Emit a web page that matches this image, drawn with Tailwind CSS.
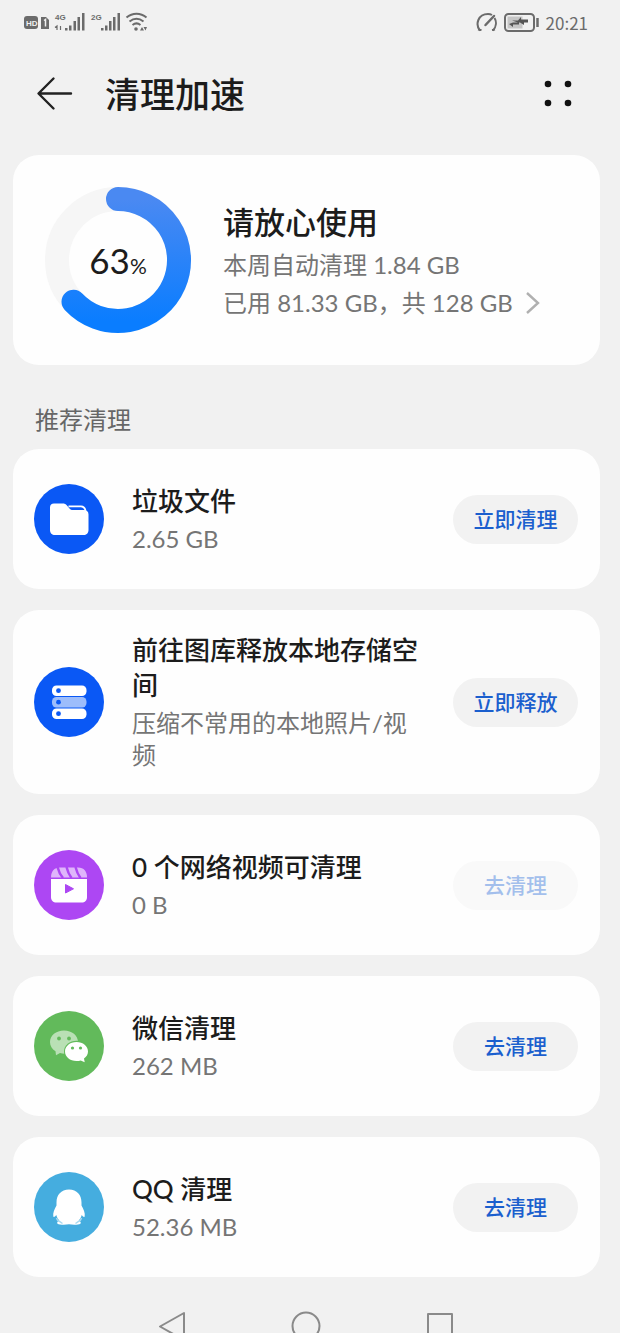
<!DOCTYPE html>
<html lang="zh-CN">
<head>
<meta charset="utf-8">
<meta name="viewport" content="width=device-width, initial-scale=1">
<title>清理加速</title>
<script src="https://cdn.jsdelivr.net/npm/@tailwindcss/browser@4"></script>
</head>
<body class="bg-[#f1f1f1] font-['Lato','Noto_Sans_CJK_SC',sans-serif] text-[#1c1c1c]">
<div class="flex min-h-screen flex-col">

  <!-- Status bar -->
  <div class="flex h-[46px] items-center justify-between pr-8 pl-6 text-[#6b6b6b]">
    <svg class="h-6 w-32" viewBox="0 0 128 24" fill="currentColor" role="img" aria-label="HD 4G 2G Wi-Fi">
      <rect x="0" y="5" width="14" height="13" rx="3"/>
      <text x="2" y="15" font-size="8" font-weight="700" fill="#f1f1f1" font-family="Liberation Sans">HD</text>
      <path d="M17 6h5l3 3v9h-8z"/>
      <path d="M20 9.500l1.500-1v7" fill="none" stroke="#f1f1f1" stroke-width="1.500"/>
      <text x="31" y="9" font-size="8" font-weight="700" font-family="Liberation Sans">4G</text>
      <path d="M33 19v-4l-2 1.500M36.500 15v4" fill="none" stroke="currentColor" stroke-width="1.200"/>
      <path d="M41 17h2.500v2.500H41zM45 14.500h2.500v5H45zM49.500 10h2.500v9.500h-2.500zM53.500 6h2.500v13.500h-2.500zM58 2h2.500v17.500H58z"/>
      <text x="67" y="9" font-size="8" font-weight="700" font-family="Liberation Sans">2G</text>
      <path d="M77 17h2.500v2.500H77zM81 14.500h2.500v5H81zM85 10h2.500v9.500H85zM89 6h2.500v13.500H89zM93.500 2H96v17.500h-2.500z"/>
      <g fill="none" stroke="currentColor" stroke-width="2"><path d="M102.500 6.500c6-5 14-5 20 0M105.500 10.500c4.500-3.500 9.500-3.500 14 0M108.500 14c2.500-2 5.500-2 8 0"/></g>
      <circle cx="112" cy="18" r="1.800"/><path d="M116 19.500l2-3.500 2 3.500zM119.500 16h3.500l-1.500 3.500z"/>
    </svg>
    <div class="flex items-center">
      <svg class="h-6 w-[70px]" viewBox="0 0 70 24" fill="none" stroke="currentColor" role="img" aria-label="电量">
        <path d="M4 19.500C-1 13.500 2 3 12 3c1.500 0 3 .4 4 1M18.500 7c2.500 4 1.500 9-1.500 12.500M2 18.500l3.500.5M19 18.500l-3 .5" stroke-width="2"/>
        <path d="M9.500 14L18 5" stroke-width="2.500" stroke-linecap="round"/>
        <rect x="29" y="3" width="29" height="17" rx="3.500" stroke-width="2"/>
        <path d="M31.500 5.500h15v12h-15z" fill="#c6c6c6" stroke="none"/>
        <path d="M36 9.500h6l3-3.500v2.500h7v3h-4v2.500l-4-2.500h-1v2h-6v2.500l-4-3 4-1.500h5z" fill="#555" stroke="none"/>
        <path d="M61.500 7v9" stroke-width="2.500"/>
      </svg>
      <time class="font-['Noto_Sans_CJK_SC',sans-serif] text-[17px] leading-6">20:21</time>
    </div>
  </div>

  <!-- Title bar -->
  <header class="flex h-[95px] items-center pr-12 pl-9">
    <button type="button" aria-label="返回" class="flex">
      <svg class="h-9 w-[37px]" viewBox="0 0 37 36" fill="none" stroke="#222" stroke-width="2.400" stroke-linecap="round" stroke-linejoin="round"><path d="M17.500 2.500L2.500 17.500l15 15M3 17.500h32"/></svg>
    </button>
    <h1 class="ml-8 flex-1 text-[35px] leading-[48px] font-medium">清理加速</h1>
    <button type="button" aria-label="更多" class="flex">
      <svg class="h-8 w-8" viewBox="0 0 32 32" fill="#111"><circle cx="8" cy="6" r="3.300"/><circle cx="28" cy="6" r="3.300"/><circle cx="8" cy="25" r="3.300"/><circle cx="28" cy="25" r="3.300"/></svg>
    </button>
  </header>

  <main class="mt-3.5 pr-5 pl-[13px]">
    <!-- Storage summary -->
    <section class="flex min-h-[210px] items-center rounded-[26px] bg-[#fefefe] pl-[31px]">
      <div class="relative h-[148px] w-[148px] shrink-0">
        <svg class="h-full w-full" viewBox="0 0 148 148" fill="none" stroke-width="24">
          <defs><linearGradient id="ring" x1="0" y1="0" x2="0" y2="1"><stop offset="0" stop-color="#4a89f2"/><stop offset="1" stop-color="#0a7dff"/></linearGradient></defs>
          <circle cx="74" cy="74" r="61" stroke="#f6f6f6"/>
          <path d="M74 13A61 61 0 1 1 29.500 115.700" stroke="url(#ring)" stroke-linecap="round"/>
        </svg>
        <p class="absolute inset-0 flex items-baseline justify-center pt-[46px] text-[35px] leading-[56px]">63<span class="text-[21px]">%</span></p>
      </div>
      <div class="ml-[31px]">
        <h2 class="text-[31px] leading-[48px] font-medium">请放心使用</h2>
        <p class="text-2xl leading-[38px] text-[#757575]">本周自动清理 1.84 GB</p>
        <a href="#storage" class="flex items-center text-2xl leading-[38px] text-[#757575]">已用 81.33 GB，共 128 GB
          <svg class="ml-3 h-6 w-4" viewBox="0 0 16 24" fill="none" stroke="#b0b0b0" stroke-width="2.400"><path d="M2 2l11 10L2 22"/></svg>
        </a>
      </div>
    </section>

    <h2 class="mt-[39px] mb-[13px] pl-[22px] text-2xl leading-8 text-[#666]">推荐清理</h2>

    <ul class="flex flex-col gap-[21px]">
      <li class="flex min-h-[140px] items-center rounded-[26px] bg-[#fefefe] py-[23px] pr-[22px] pl-[21px]">
        <svg class="h-[70px] w-[70px] shrink-0" viewBox="0 0 70 70" aria-hidden="true">
          <circle cx="35" cy="35" r="35" fill="#0a58f5"/>
          <path d="M20 19.500h9c1.500 0 2.500.5 3.500 1.500l3 3.500c1 1 2 1.500 3.500 1.500h11c2.800 0 4.500 1.700 4.500 4.500V46c0 3-2 5-5 5H21c-3 0-5-2-5-5V23.500c0-2.500 1.500-4 4-4z" fill="#fff"/>
          <path d="M34.500 22.300H47c2.500 0 4 1.500 4.500 4.500" fill="none" stroke="#fff" stroke-width="1.800"/>
        </svg>
        <div class="mx-7 flex-1">
          <h3 class="text-[26px] leading-[35px] font-medium">垃圾文件</h3>
          <p class="mt-1 text-2xl leading-8 text-[#757575]">2.65 GB</p>
        </div>
        <button type="button" class="h-[49px] w-[125px] shrink-0 rounded-full bg-[#f2f2f2] text-[21px] font-medium text-[#1b5fce]">立即清理</button>
      </li>

      <li class="flex min-h-[140px] items-center rounded-[26px] bg-[#fefefe] py-[23px] pr-[22px] pl-[21px]">
        <svg class="h-[70px] w-[70px] shrink-0" viewBox="0 0 70 70" aria-hidden="true">
          <circle cx="35" cy="35" r="35" fill="#0a58f5"/>
          <rect x="18" y="18.500" width="34.500" height="10.500" rx="4.500" fill="#fff"/>
          <rect x="18" y="30" width="34.500" height="10.500" rx="4.500" fill="#9dbdfb"/>
          <rect x="18" y="41.500" width="34.500" height="10.500" rx="4.500" fill="#fff"/>
          <g fill="#0a58f5"><circle cx="24.500" cy="23.700" r="2.400"/><circle cx="24.500" cy="35.200" r="2.400"/><circle cx="24.500" cy="46.700" r="2.400"/></g>
        </svg>
        <div class="mx-7 flex-1">
          <h3 class="text-[26px] leading-[35px] font-medium">前往图库释放本地存储空间</h3>
          <p class="mt-1 text-2xl leading-8 text-[#757575]">压缩不常用的本地照片/视频</p>
        </div>
        <button type="button" class="h-[49px] w-[125px] shrink-0 rounded-full bg-[#f2f2f2] text-[21px] font-medium text-[#1b5fce]">立即释放</button>
      </li>

      <li class="flex min-h-[140px] items-center rounded-[26px] bg-[#fefefe] py-[23px] pr-[22px] pl-[21px]">
        <svg class="h-[70px] w-[70px] shrink-0" viewBox="0 0 70 70" aria-hidden="true">
          <circle cx="35" cy="35" r="35" fill="#ad47f3"/>
          <path d="M17 27.500c0-6 3-10 9-10h18c6 0 9 4 9 10z" fill="#dfb5fb"/>
          <path d="M23.500 17c1 4 2 7 5.500 11M32.500 17c1 4 2 7 5 11M41.500 17c1 4 2 7 5 11" stroke="#ad47f3" stroke-width="2.500" fill="none"/>
          <path d="M17 29h36v18c0 3.500-2 5.500-5.500 5.500h-25C19 52.500 17 50.500 17 47z" fill="#fff"/>
          <path d="M31.500 34.500v8.500l8-4.200z" fill="#ad47f3" stroke="#ad47f3" stroke-linejoin="round"/>
        </svg>
        <div class="mx-7 flex-1">
          <h3 class="text-[26px] leading-[35px] font-medium">0 个网络视频可清理</h3>
          <p class="mt-1 text-2xl leading-8 text-[#757575]">0 B</p>
        </div>
        <button type="button" disabled class="h-[49px] w-[125px] shrink-0 rounded-full bg-[#f9f9f9] text-[21px] font-medium text-[#a3bfec]">去清理</button>
      </li>

      <li class="flex min-h-[140px] items-center rounded-[26px] bg-[#fefefe] py-[23px] pr-[22px] pl-[21px]">
        <svg class="h-[70px] w-[70px] shrink-0" viewBox="0 0 70 70" aria-hidden="true">
          <circle cx="35" cy="35" r="35" fill="#62ba5b"/>
          <path d="M30 19.500c-8 0-14 5-14 11.500 0 4 2 7 5.500 9.200l.5 4 4-2.200c8 2.500 18-2 18-11 0-6.500-6-11.500-14-11.500z" fill="#b9e0b5"/>
          <ellipse cx="42.500" cy="40.500" rx="12.500" ry="10.800" fill="#62ba5b"/>
          <path d="M42.500 31c-6.500 0-11.500 4.200-11.500 9.500s5 9.500 11.500 9.500c1.600 0 3-.2 4.200-.6l4 1.800-.7-3.700c2.500-1.700 4-4.200 4-7 0-5.300-5-9.500-11.500-9.500z" fill="#fff"/>
          <g fill="#62ba5b"><circle cx="25" cy="27.500" r="1.900"/><circle cx="35" cy="27.500" r="1.900"/><circle cx="38.500" cy="37" r="1.600"/><circle cx="46.500" cy="37" r="1.600"/></g>
        </svg>
        <div class="mx-7 flex-1">
          <h3 class="text-[26px] leading-[35px] font-medium">微信清理</h3>
          <p class="mt-1 text-2xl leading-8 text-[#757575]">262 MB</p>
        </div>
        <button type="button" class="h-[49px] w-[125px] shrink-0 rounded-full bg-[#f2f2f2] text-[21px] font-medium text-[#1b5fce]">去清理</button>
      </li>

      <li class="flex min-h-[140px] items-center rounded-[26px] bg-[#fefefe] py-[23px] pr-[22px] pl-[21px]">
        <svg class="h-[70px] w-[70px] shrink-0" viewBox="0 0 70 70" aria-hidden="true">
          <circle cx="35" cy="35" r="35" fill="#45addf"/>
          <path d="M35 17.500c-8 0-12.500 5.500-12.500 13v3c-2 3.500-3.800 7.500-3.200 11 .4 1 1.800.2 3-1.500.5 2.200 1.500 4 3 5.500-2.800 1.300-3 3.700.7 4 3 .3 6.500.2 9-.2 2.500.4 6 .5 9 .2 3.700-.3 3.500-2.700.7-4 1.500-1.500 2.500-3.300 3-5.500 1.200 1.700 2.600 2.500 3 1.500.6-3.500-1.200-7.500-3.200-11v-3c0-7.500-4.500-13-12.500-13z" fill="#fff"/>
          <path d="M22.500 46c.5 2 1.500 3 3 3.500l3 2M47.500 46c-.5 2-1.500 3-3 3.500l-3 2" fill="none" stroke="#a8d9f0" stroke-width="1.500"/>
        </svg>
        <div class="mx-7 flex-1">
          <h3 class="text-[26px] leading-[35px] font-medium">QQ 清理</h3>
          <p class="mt-1 text-2xl leading-8 text-[#757575]">52.36 MB</p>
        </div>
        <button type="button" class="h-[49px] w-[125px] shrink-0 rounded-full bg-[#f2f2f2] text-[21px] font-medium text-[#1b5fce]">去清理</button>
      </li>
    </ul>
  </main>

  <!-- System navigation, partly below the fold -->
  <nav class="flex h-14 items-start justify-center gap-[105px] overflow-hidden pt-[34px] pr-2" aria-label="系统导航">
    <button type="button" aria-label="返回"><svg class="h-8 w-7" viewBox="0 0 28 32" fill="none" stroke="#8a8a8a" stroke-width="2" stroke-linejoin="round"><path d="M26 2v27L2 15.500z"/></svg></button>
    <button type="button" aria-label="主页"><svg class="h-8 w-[30px]" viewBox="0 0 30 32" fill="none" stroke="#8a8a8a" stroke-width="2"><circle cx="15" cy="15" r="13.500"/></svg></button>
    <button type="button" aria-label="最近任务"><svg class="h-8 w-7" viewBox="0 0 28 32" fill="none" stroke="#8a8a8a" stroke-width="2" stroke-linejoin="round"><rect x="2" y="3" width="24" height="24"/></svg></button>
  </nav>
</div>
</body>
</html>
